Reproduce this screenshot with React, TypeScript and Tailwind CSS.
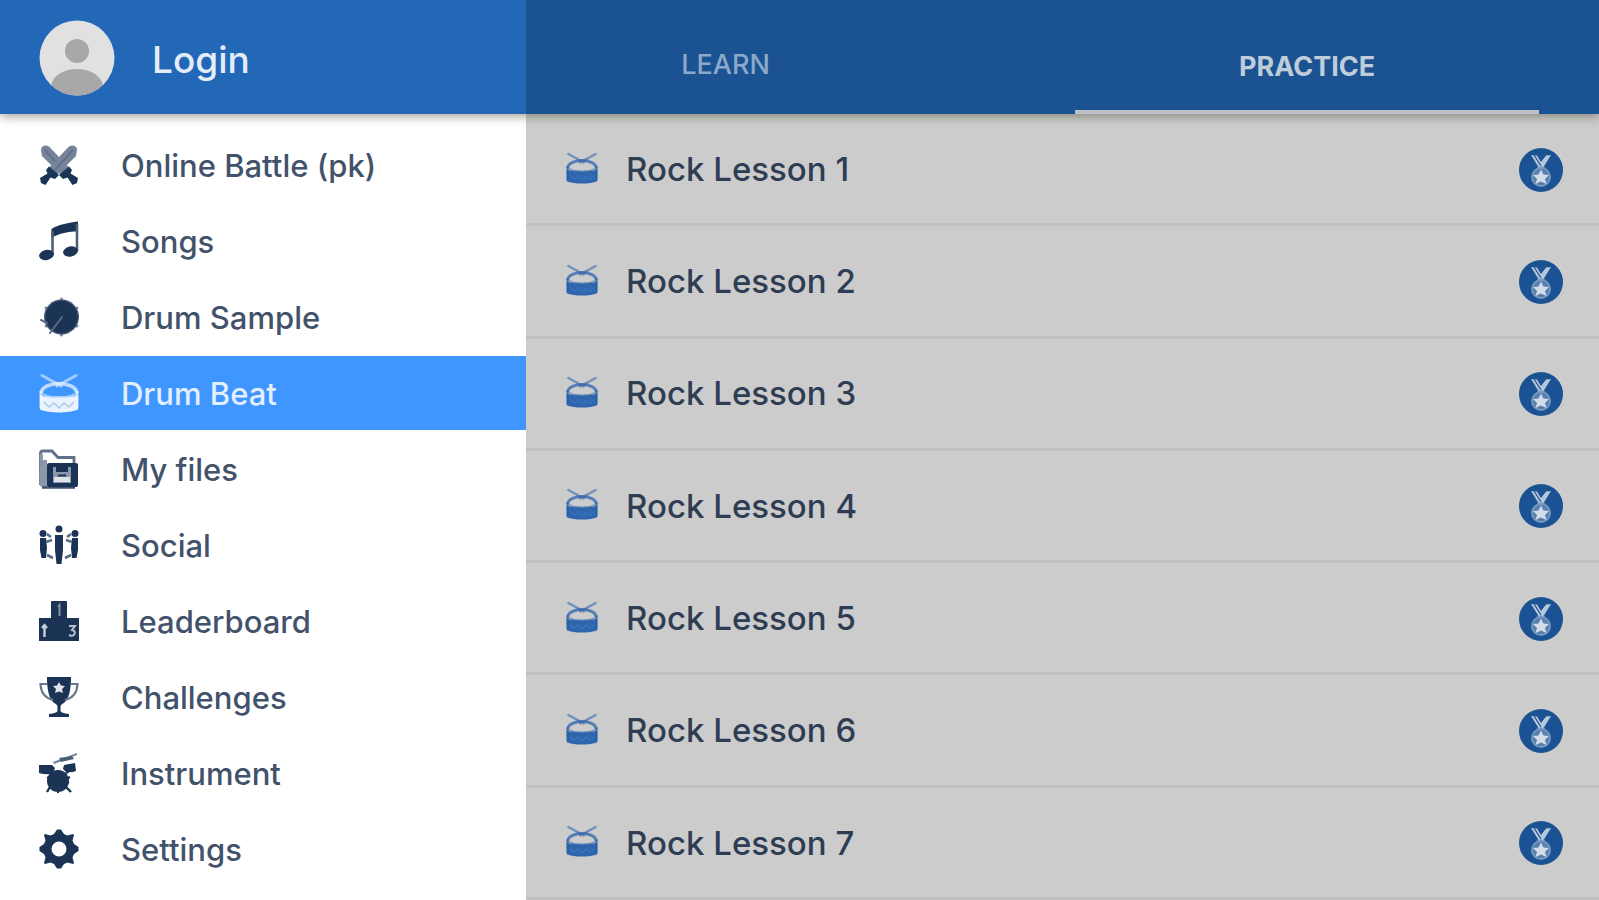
import type { ReactNode } from "react";

const NAVY = "#1b3354";

const DrumIcon = ({ className }: { className: string }) => (
	<svg viewBox="0 0 40 40" className={className} fill="none" stroke="currentColor" aria-hidden="true">
		<path d="M3 2.5 L22 13 M37 2.5 L18 13" strokeWidth="3" strokeLinecap="round" opacity="0.55" />
		<path d="M2 20 C4 7.500 36 7.500 38 20" strokeWidth="3.6" opacity="0.7" />
		<path d="M2 18 V35 M38 18 V35" strokeWidth="3" opacity="0.75" />
		<path d="M4 21 C10 25 30 25 36 21" strokeWidth="2" opacity="0.6" />
		<path
			d="M1 22 C9 25.500 31 25.500 39 22 V36.500 C30 40.500 10 40.500 1 36.500 Z"
			fill="currentColor"
			stroke="none"
			opacity="0.95"
		/>
		<path d="M5 29 L10 34 L15 30 L20 35 L25 30 L30 34 L35 29" strokeWidth="1.5" stroke="#4f8ad6" opacity="0.4" />
	</svg>
);

const MedalIcon = () => (
	<svg viewBox="0 0 44 44" className="h-11 w-11 shrink-0" role="img" aria-label="Medal">
		<circle cx="22" cy="22" r="22" fill="#1a5293" />
		<path d="M12 7 L18 7.500 L22 14 L27 7.500 L32 7 L24.500 19 H19.500 Z" fill="#b5c8dc" />
		<path d="M15 7 L22 18" stroke="#1a5293" strokeWidth="1.2" />
		<path d="M18.500 18.500 H25.500 V22 H18.500 Z" fill="#8fabc9" />
		<circle cx="22" cy="29" r="10" fill="#7598bf" />
		<circle cx="22" cy="29" r="8" fill="#1a5293" opacity="0.35" />
		<path d="M22 21.500 L24.500 26.500 L30 27 L26 31 L27.500 36 L22 33.500 L16.500 36 L18 31 L14 27 L19.500 26.500 Z" fill="#d3dde7" />
	</svg>
);

const Sword = () => (
	<g>
		<path d="M2 5 C2 1 6 -0.500 10 1.500 L30 22.500 L22 30 L3 11 Z" fill="#75849a" />
		<path d="M6 5 L25 26" stroke="#5d6e87" strokeWidth="1.6" />
		<path d="M20 30 L30 21.500 L33 25 L31.500 28.500 L39 33 L38 38 L33.500 40 L28.500 32.500 L24 34 Z" fill={NAVY} />
	</g>
);

const Icon = ({ children }: { children: ReactNode }) => (
	<svg viewBox="0 0 40 40" className="h-10 w-10 shrink-0" fill={NAVY} aria-hidden="true">
		{children}
	</svg>
);

const menuItems: { label: string; icon: ReactNode; active?: boolean }[] = [
	{
		label: "Online Battle (pk)",
		icon: (
			<Icon>
				<Sword />
				<g transform="matrix(-1 0 0 1 40 0)">
					<Sword />
				</g>
			</Icon>
		),
	},
	{
		label: "Songs",
		icon: (
			<Icon>
				<path d="M12.500 8 C20 3 30 2 39 0.500 V10 C30 11 20 12 12.500 17 Z" />
				<path d="M13.500 10 V33 M38 3 V30" stroke="#4d607b" strokeWidth="2.600" />
				<ellipse cx="7.500" cy="34" rx="7.500" ry="5" transform="rotate(-12 7.500 34)" />
				<ellipse cx="31.500" cy="30.500" rx="7.500" ry="5" transform="rotate(-12 31.500 30.500)" />
			</Icon>
		),
	},
	{
		label: "Drum Sample",
		icon: (
			<Icon>
				<g stroke="#7d8b9f" strokeWidth="3" strokeLinecap="round">
					<path d="M22.500 2 V38 M7 11 L38 29 M7 29 L38 11" />
				</g>
				<circle cx="22.500" cy="20" r="17.500" fill="#40536f" />
				<circle cx="22.500" cy="20" r="16" />
				<path d="M2 23 L8 26 M11 36 L23 20" stroke="#5a6c85" strokeWidth="2" strokeLinecap="round" />
			</Icon>
		),
	},
	{ label: "Drum Beat", icon: <DrumIcon className="h-10 w-10 shrink-0 text-[#f2f7ff]" />, active: true },
	{
		label: "My files",
		icon: (
			<Icon>
				<path d="M1.500 36 V4 Q1.500 2 4 2 H13 L19 8.500 H35 V15" fill="none" stroke="#5f7088" strokeWidth="2.800" />
				<path d="M1 5 H4 V11 H8 V38 H4 Q0.500 38 0.500 34 Z" fill="#8b98aa" />
				<path d="M3 38.500 H36" stroke="#3f536f" strokeWidth="2.500" />
				<rect x="8" y="14" width="31" height="24" rx="2" />
				<path d="M14 18 H32 V34 H14 Z" fill="#8997aa" />
				<path d="M17 18 H29 V23 H17 Z" fill={NAVY} />
				<path d="M15 28 H31 V33 H15 Z" fill="#dfe4ea" />
				<path d="M19 26.500 H27" stroke={NAVY} strokeWidth="2" />
			</Icon>
		),
	},
	{
		label: "Social",
		icon: (
			<Icon>
				<circle cx="20" cy="4" r="3.500" />
				<path d="M16 10 H24 V25 L22.500 39 H17.500 L16 25 Z" />
				<circle cx="4" cy="8.500" r="3.500" />
				<path d="M1 13 H7 L8 23 L7 33 H2.500 L1 25 Z" />
				<circle cx="36" cy="8.500" r="3.500" />
				<path d="M39 13 H33 L32 23 L33 33 H37.500 L39 25 Z" />
				<path
					d="M8 9 L12 12 M32 9 L28 12 M7 17 L13 15 M33 17 L27 15 M8 30 L14 33 M32 30 L26 33"
					stroke="#5a6c85"
					strokeWidth="2.600"
				/>
			</Icon>
		),
	},
	{
		label: "Leaderboard",
		icon: (
			<Icon>
				<path d="M0 17 H12 V1 Q12 0 13 0 H27 Q28 0 28 1 V17 H40 V40 H0 Z" />
				<path d="M19 6 L20.500 4 V15" fill="none" stroke="#8795a8" strokeWidth="2" />
				<path d="M3 27 L5.500 24 L8 27 M5.500 24 V36" fill="none" stroke="#c9d0d9" strokeWidth="2.400" />
				<path d="M30 25 H36 L33 29 Q37 30 35.500 33 Q34 36 30 34" fill="none" stroke="#b5bfcb" strokeWidth="2" />
			</Icon>
		),
	},
	{
		label: "Challenges",
		icon: (
			<Icon>
				<path d="M8 0 H32 V4 Q31 24 23 27 L21.500 29 V34 Q22 36 30 37 V40 H10 V37 Q18 36 18.500 34 V29 L17 27 Q9 24 8 4 Z" />
				<path d="M8 7 H1.500 Q2 20 14 23 M32 7 H38.500 Q38 20 26 23" fill="none" stroke="#68788f" strokeWidth="2.200" />
				<path d="M20 5 L22 8.500 L26 9 L23 12 L24 16 L20 14.500 L16 16 L17 12 L14 9 L18 8.500 Z" fill="#dfe4ea" />
			</Icon>
		),
	},
	{
		label: "Instrument",
		icon: (
			<Icon>
				<path d="M14 9 L38 0 L38 2 L15 11 Z" fill="#75849a" />
				<path d="M20 5 L33 3 L35 6 L22 9 Z" fill="#4d607b" />
				<path d="M0 12 H13 L16 15 L14 21 Q6 22 0 20 Z M25 12 L36 10 L37 18 Q32 20 27 19 L24 16 Z" />
				<path d="M10 20 L16 22 M30 18 L25 22 M10 29 L13 31 M30 29 L27 31" stroke={NAVY} strokeWidth="2" />
				<circle cx="19" cy="28" r="11" />
				<path d="M11 34 L8 39 M27 34 L32 39" stroke={NAVY} strokeWidth="2.400" />
				<path d="M8 24 L11 26 M31 24 L27 26 M19 37 V40" stroke={NAVY} strokeWidth="2" />
			</Icon>
		),
	},
	{
		label: "Settings",
		icon: (
			<Icon>
				<path
					fillRule="evenodd"
					d="M18 0.500 H22 L25 5 L28.500 6.500 L34 5 L35 6 L33.500 11.500 L35 15 L39.500 18 V22 L35 25 L33.500 28.500 L35 34 L34 35 L28.500 33.500 L25 35 L22 39.500 H18 L15 35 L11.500 33.500 L6 35 L5 34 L6.500 28.500 L5 25 L0.500 22 V18 L5 15 L6.500 11.500 L5 6 L6 5 L11.500 6.500 L15 5 Z M20 12.500 A7.500 7.500 0 1 0 20 27.500 A7.500 7.500 0 1 0 20 12.500 Z"
				/>
			</Icon>
		),
	},
];

const lessons = [1, 2, 3, 4, 5, 6, 7];

export default function App() {
	return (
		<div className="flex min-h-screen flex-col bg-[#cccccc] font-['Inter',sans-serif]">
			<header className="relative z-10 flex h-[114px] shadow-[0_2px_10px_rgba(60,55,30,0.5)]">
				<a href="#login" className="flex w-[32.9%] shrink-0 items-center gap-[37px] bg-[#2367b7] pt-0.5 pl-[39px]">
					<svg viewBox="0 0 76 76" className="h-[76px] w-[76px] shrink-0" aria-hidden="true">
						<defs>
							<clipPath id="avatar">
								<circle cx="38" cy="38" r="37.500" />
							</clipPath>
						</defs>
						<g clipPath="url(#avatar)">
							<rect width="76" height="76" fill="#e1e1e1" />
							<circle cx="38" cy="31" r="12" fill="#a8a8a8" />
							<ellipse cx="38" cy="67" rx="26" ry="18" fill="#a8a8a8" />
						</g>
					</svg>
					<span className="pt-1 text-[37px] leading-10 font-medium text-[#e3edf8]">Login</span>
				</a>

				<nav className="flex grow bg-[#1b5291]">
					<a
						href="#learn"
						className="mr-[14%] flex w-[37.2%] items-center justify-center pt-4 text-[27px] font-medium text-[#8ba9c9]"
					>
						LEARN
					</a>
					<a
						href="#practice"
						aria-current="page"
						className="flex w-[43.2%] items-center justify-center border-b-4 border-[#bdbfcc] pt-6 text-[27px] font-bold text-[#bfcddb]"
					>
						PRACTICE
					</a>
				</nav>
			</header>

			<div className="flex grow">
				<nav className="flex w-[32.9%] shrink-0 flex-col gap-0.5 bg-white pt-3.5">
					{menuItems.map((item) => (
						<a
							key={item.label}
							href={`#${item.label}`}
							aria-current={item.active ? "page" : undefined}
							className={`flex h-[74px] items-center gap-[42px] pl-[39px] text-[31px] font-medium ${
								item.active ? "bg-[#4096ff] text-[#e3efff]" : "text-[#42526b]"
							}`}
						>
							{item.icon}
							<span className="pt-0.5">{item.label}</span>
						</a>
					))}
				</nav>

				<ul className="flex grow flex-col">
					{lessons.map((n) => (
						<li key={n} className="flex min-h-28 grow border-b-3 border-[#c1c1c1]">
							<a
								href={`#lesson-${n}`}
								className="flex grow items-center pt-0.5 pr-9 pl-10 text-[33px] font-medium text-[#2f3d54]"
							>
								<DrumIcon className="mr-7 mb-1 h-8 w-8 shrink-0 text-[#2460aa]" />
								<span className="grow">Rock Lesson {n}</span>
								<MedalIcon />
							</a>
						</li>
					))}
				</ul>
			</div>
		</div>
	);
}
